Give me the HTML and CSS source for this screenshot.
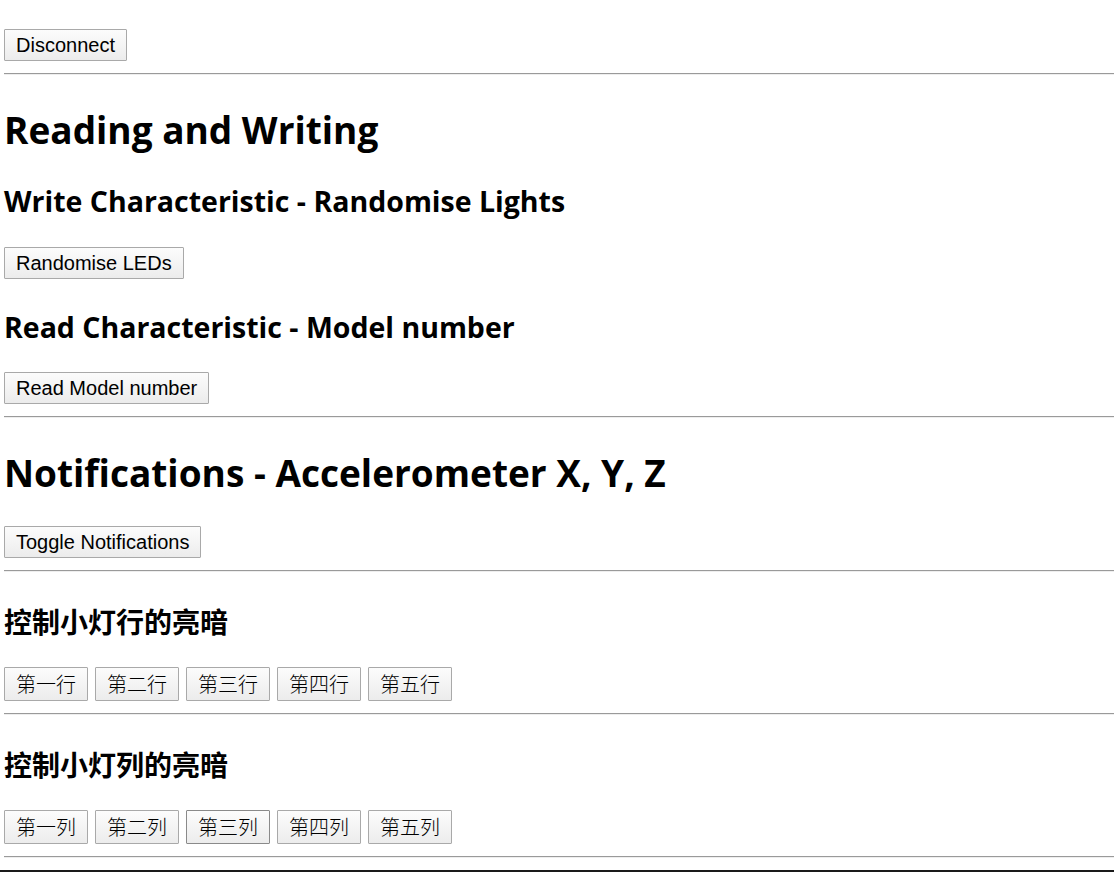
FILE: index.html
```html
<!DOCTYPE html>
<html lang="en">
<head>
<meta charset="utf-8">
<title>micro:bit BLE</title>
<link rel="stylesheet" href="styles.css">
</head>
<body>
<div class="page">
  <div class="top"><button class="btn">Disconnect</button></div>
  <hr class="rule">
  <h1 class="h1">Reading and Writing</h1>
  <h2 class="h2">Write Characteristic - Randomise Lights</h2>
  <div class="row"><button class="btn">Randomise LEDs</button></div>
  <h2 class="h2">Read Characteristic - Model number</h2>
  <div class="row"><button class="btn">Read Model number</button></div>
  <hr class="rule">
  <h1 class="h1">Notifications - Accelerometer X, Y, Z</h1>
  <div class="row"><button class="btn">Toggle Notifications</button></div>
  <hr class="rule">
  <h3 class="h3">控制小灯行的亮暗</h3>
  <div class="row cn">
    <button class="btn">第一行</button>
    <button class="btn">第二行</button>
    <button class="btn">第三行</button>
    <button class="btn">第四行</button>
    <button class="btn">第五行</button>
  </div>
  <hr class="rule">
  <h3 class="h3">控制小灯列的亮暗</h3>
  <div class="row cn">
    <button class="btn">第一列</button>
    <button class="btn">第二列</button>
    <button class="btn btn-active">第三列</button>
    <button class="btn">第四列</button>
    <button class="btn">第五列</button>
  </div>
  <hr class="rule">
</div>
<div class="edge"></div>
</body>
</html>
```

FILE: styles.css
```css
html, body {
  margin: 0;
  padding: 0;
  background: #ffffff;
  color: #000000;
}
body {
  font-family: "Liberation Sans", Arial, sans-serif;
  overflow: hidden;
}
.page {
  padding-left: 4px;
  display: flex;
  flex-direction: column;
}
.top {
  padding-top: 29px;
  display: flex;
}
.row {
  display: flex;
  gap: 7px;
}
.btn {
  font-family: "Liberation Sans", Arial, "Noto Sans CJK SC", sans-serif;
  font-size: 20px;
  line-height: 22px;
  color: #000;
  height: 32px;
  padding: 0 11px;
  border: 1px solid #a9a9a9;
  border-radius: 1px;
  background: linear-gradient(#fcfcfc, #ececec);
  cursor: pointer;
}
.cn .btn {
  font-family: "Noto Sans CJK SC", sans-serif;
  font-weight: 300;
  height: 34px;
  width: 84px;
  padding: 0;
}
.btn-active {
  border-color: #8a8a8a;
}
.rule {
  margin: 12px 0 0 0;
  height: 0;
  border: 0;
  border-top: 1px solid #9a9a9a;
  border-bottom: 1px solid #eeeeee;
}
.h1 {
  font-family: "Open Sans", sans-serif;
  font-weight: 700;
  font-size: 37px;
  line-height: 48px;
  margin: 31px 0 0 0;
}
.h2 {
  font-family: "Open Sans", sans-serif;
  font-weight: 700;
  font-size: 28.5px;
  line-height: 34px;
  margin: 30px 0 29px 0;
}
.h1 + .h2 {
  margin-top: 30px;
}
.row + .h2 {
  margin-top: 31px;
  margin-bottom: 28px;
}
.h1 + .row {
  margin-top: 29px;
}
.h3 {
  font-family: "Noto Sans CJK SC", sans-serif;
  font-weight: 700;
  font-size: 28px;
  line-height: 34px;
  margin: 32px 0 29px 0;
}
.edge {
  position: fixed;
  left: 0;
  right: 0;
  bottom: 0;
  height: 2px;
  background: #1a1a1a;
}
```
